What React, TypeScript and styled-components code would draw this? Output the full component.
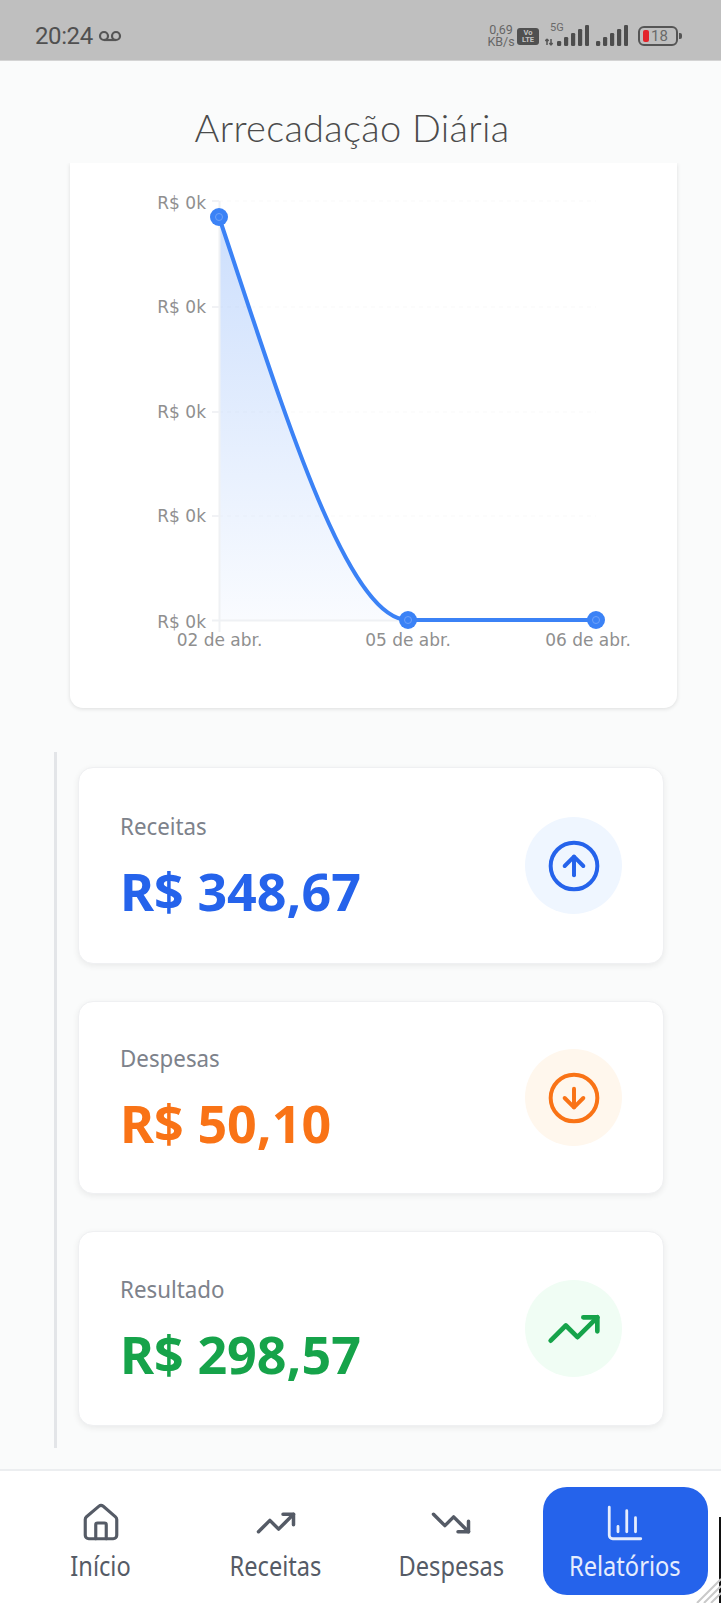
import React from 'react';
import styled, { createGlobalStyle } from 'styled-components';
import { CircleArrowUp, CircleArrowDown, TrendingUp, TrendingDown, House, ChartColumn } from 'lucide-react';

const Global = createGlobalStyle`
  html, body { margin: 0; padding: 0; background: #fafbfb; }
  * { box-sizing: border-box; }
`;

const Screen = styled.div`
  position: relative;
  width: 721px;
  height: 1603px;
  overflow: hidden;
  display: flex;
  flex-direction: column;
  background: #fafbfb;
  font-family: "Noto Sans", sans-serif;
`;

const StatusBar = styled.div`
  height: 61px;
  flex: none;
  background: #bfbfbf;
  border-bottom: 1px solid #d4d4d4;
  display: flex;
  align-items: center;
  justify-content: space-between;
  padding: 12px 38px 0 35px;
  color: #555;
  font-family: Roboto, sans-serif;
`;
const StatusLeft = styled.div`
  display: flex;
  align-items: center;
  gap: 5px;
`;
const Time = styled.span`
  font-size: 24px;
  letter-spacing: -0.4px;
  line-height: 1;
  color: #505050;
`;
const StatusRight = styled.div`
  display: flex;
  align-items: center;
`;
const Speed = styled.div`
  display: flex;
  flex-direction: column;
  align-items: center;
  font-size: 12.5px;
  line-height: 12.5px;
  color: #666;
  width: 28px;
  margin-right: 2px;
  white-space: nowrap;
`;
const Volte = styled.div`
  width: 22px;
  height: 17px;
  border-radius: 3px;
  background: #505050;
  color: #c4c4c4;
  font-size: 7.5px;
  font-weight: 700;
  line-height: 7.5px;
  display: flex;
  flex-direction: column;
  align-items: center;
  justify-content: center;
  margin-right: 6px;
`;
const SignalBox = styled.div`
  position: relative;
  width: 44px;
  height: 22px;
  margin-right: 7px;
`;
const FiveG = styled.span`
  position: absolute;
  left: 5px;
  top: -3px;
  font-size: 11px;
  line-height: 11px;
  color: #6a6a6a;
`;
const Battery = styled.div`
  position: relative;
  width: 40px;
  height: 20px;
  margin-left: 10px;
  margin-right: 5px;
  border: 2px solid #555;
  border-radius: 6px;
  display: flex;
  align-items: center;
  padding-left: 3px;
  &::after {
    content: '';
    position: absolute;
    right: -6px;
    top: 5px;
    width: 3px;
    height: 6px;
    border-radius: 0 2px 2px 0;
    background: #555;
  }
`;
const BatteryFill = styled.span`
  width: 6px;
  height: 12px;
  border-radius: 2px;
  background: #e3242b;
  margin-right: 2px;
`;
const BatteryText = styled.span`
  font-size: 15px;
  line-height: 1;
  color: #6a6a6a;
`;

const Header = styled.div`
  height: 102px;
  flex: none;
  display: flex;
  align-items: flex-start;
  justify-content: center;
  padding: 44px 17px 0 0;
`;
const Title = styled.h1`
  margin: 0;
  font-family: Lato, sans-serif;
  font-weight: 300;
  font-size: 38px;
  line-height: 44px;
  color: #4b4b4b;
  letter-spacing: 0.3px;
`;

const ChartCard = styled.section`
  flex: none;
  width: 607px;
  height: 545px;
  margin-left: 70px;
  background: #fff;
  border-radius: 0 0 13px 13px;
  box-shadow: 0 1px 4px rgba(0, 0, 0, 0.12);
  clip-path: inset(0 -8px -8px -8px);
`;
const ChartSvg = styled.svg`
  display: block;
  width: 607px;
  height: 545px;
`;
const AxisText = styled.text`
  font-family: "DejaVu Sans", sans-serif;
  font-size: 17px;
  fill: #8f8f8f;
`;

const SummaryColumn = styled.div`
  flex: none;
  width: 610px;
  height: 696px;
  margin: 44px 0 21px 54px;
  padding: 15px 0 0 21px;
  border-left: 3px solid #e3e5e8;
  display: flex;
  flex-direction: column;
  gap: 37px;
`;
const SummaryCard = styled.article<{ $h: number }>`
  height: ${p => p.$h}px;
  flex: none;
  background: #fff;
  border: 1px solid #eff0f2;
  border-radius: 15px;
  box-shadow: 0 2px 6px rgba(0, 0, 0, 0.07);
  display: flex;
  align-items: center;
  justify-content: space-between;
  padding: 0 41px 0 41px;
`;
const SummaryText = styled.div`
  display: flex;
  flex-direction: column;
  gap: 18px;
`;
const SummaryLabel = styled.span`
  font-size: 24px;
  line-height: 33px;
  color: #7d828b;
  transform: scaleX(0.93);
  transform-origin: left center;
`;
const SummaryValue = styled.span<{ $c: string }>`
  font-size: 52px;
  line-height: 62px;
  font-weight: 700;
  color: ${p => p.$c};
  white-space: nowrap;
`;
const IconCircle = styled.div<{ $bg: string; $c: string }>`
  width: 97px;
  height: 97px;
  border-radius: 50%;
  background: ${p => p.$bg};
  color: ${p => p.$c};
  display: flex;
  align-items: center;
  justify-content: center;
`;

const Nav = styled.nav`
  flex: none;
  height: 134px;
  background: #fff;
  border-top: 2px solid #eceef0;
  display: grid;
  grid-template-columns: 167px 167px 167px 165px;
  column-gap: 8px;
  padding: 16px 0 9px 17.5px;
`;
const NavItem = styled.div<{ $active?: boolean }>`
  border-radius: 24px;
  display: flex;
  flex-direction: column;
  align-items: center;
  height: 108px;
  background: ${p => (p.$active ? '#2563eb' : 'transparent')};
  color: ${p => (p.$active ? '#e6edfd' : '#555b66')};
`;
const NavIconSlot = styled.div`
  height: 58px;
  display: flex;
  align-items: flex-end;
  justify-content: center;
  padding-bottom: 1px;
`;
const NavLabel = styled.span`
  font-size: 27px;
  line-height: 36px;
  margin-top: 3px;
  white-space: nowrap;
  transform: scaleX(0.875);
`;

const EdgeLine = styled.div`
  position: absolute;
  right: 0;
  top: 1517px;
  bottom: 0;
  width: 2px;
  background: #111;
`;
const CornerHatch = styled.svg`
  position: absolute;
  right: 0;
  bottom: 0;
  width: 26px;
  height: 26px;
`;

function Signal({ arrows }: { arrows?: boolean }) {
  const bars = [
    [0, 16, 5],
    [7, 12, 9],
    [14, 8, 13],
    [21, 4, 17],
    [28, 0, 21],
  ];
  const dx = arrows ? 12 : 0;
  const w = arrows ? 44 : 32;
  return (
    <svg width={w} height="22" viewBox={`0 0 ${w} 22`} style={{ display: 'block' }}>
      {arrows && (
        <path d="M2 20v-6M2 14l-1.6 2M2 14l1.6 2M6 14v6M6 20l-1.6-2M6 20l1.6-2" stroke="#555" strokeWidth="1.5" fill="none" />
      )}
      {bars.map(([x, y, h], i) => (
        <rect key={i} x={x + dx} y={y} width="4.2" height={h} rx="1.3" fill="#4d4d4d" />
      ))}
    </svg>
  );
}

function Chart() {
  const gridYs = [201, 307, 412, 516];
  const labelYs = [208.5, 312.5, 417.5, 521.5, 627.5];
  const points = [[219, 217], [408, 620], [596, 620]];
  const xLabels: [number, string][] = [[219.5, '02 de abr.'], [408, '05 de abr.'], [588, '06 de abr.']];
  const curve = 'M219 217C281 402 346 620 408 620L596 620';
  return (
    <ChartSvg viewBox="70 163 607 545">
      <defs>
        <linearGradient id="area" x1="0" y1="0" x2="0" y2="1">
          <stop offset="0" stopColor="#3b82f6" stopOpacity="0.26" />
          <stop offset="1" stopColor="#3b82f6" stopOpacity="0.03" />
        </linearGradient>
      </defs>
      {gridYs.map(y => (
        <line key={y} x1="219" x2="596" y1={y} y2={y} stroke="#fbfbfc" strokeWidth="1.5" strokeDasharray="4 4" />
      ))}
      <path d="M219 217C281 402 346 620 408 620L219 620Z" fill="url(#area)" />
      <line x1="219.5" x2="219.5" y1="201" y2="632" stroke="#eff1f4" strokeWidth="2" />
      <line x1="212" x2="596" y1="620.5" y2="620.5" stroke="#eff1f4" strokeWidth="2" />
      {gridYs.map(y => (
        <line key={y} x1="212" x2="219" y1={y} y2={y} stroke="#f1f2f5" strokeWidth="2" />
      ))}
      <path d={curve} fill="none" stroke="#3b82f6" strokeWidth="4" />
      {points.map(([x, y]) => (
        <g key={x}>
          <circle cx={x} cy={y} r="9" fill="#3b82f6" />
          <circle cx={x} cy={y} r="3.5" fill="none" stroke="#6fa2f8" strokeWidth="1" />
        </g>
      ))}
      {labelYs.map((y, i) => (
        <AxisText key={i} x="206" y={y} textAnchor="end">R$ 0k</AxisText>
      ))}
      {xLabels.map(([x, t]) => (
        <AxisText key={t} x={x} y="646" textAnchor="middle">{t}</AxisText>
      ))}
    </ChartSvg>
  );
}

export default function App() {
  return (
    <Screen>
      <Global />
      <StatusBar>
        <StatusLeft>
          <Time>20:24</Time>
          <svg width="24" height="12" viewBox="0 0 24 12">
            <circle cx="6" cy="6" r="4" fill="none" stroke="#555" strokeWidth="2.2" />
            <circle cx="18" cy="6" r="4" fill="none" stroke="#555" strokeWidth="2.2" />
            <line x1="6" y1="10" x2="18" y2="10" stroke="#555" strokeWidth="2.2" />
          </svg>
        </StatusLeft>
        <StatusRight>
          <Speed><span>0,69</span><span>KB/s</span></Speed>
          <Volte><span>Vo</span><span>LTE</span></Volte>
          <SignalBox>
            <FiveG>5G</FiveG>
            <Signal arrows />
          </SignalBox>
          <Signal />
          <Battery>
            <BatteryFill />
            <BatteryText>18</BatteryText>
          </Battery>
        </StatusRight>
      </StatusBar>
      <Header>
        <Title>Arrecadação Diária</Title>
      </Header>
      <ChartCard>
        <Chart />
      </ChartCard>
      <SummaryColumn>
        <SummaryCard $h={197}>
          <SummaryText>
            <SummaryLabel>Receitas</SummaryLabel>
            <SummaryValue $c="#2563eb">R$ 348,67</SummaryValue>
          </SummaryText>
          <IconCircle $bg="#eff6ff" $c="#2563eb"><CircleArrowUp size={56} strokeWidth={1.7} /></IconCircle>
        </SummaryCard>
        <SummaryCard $h={193}>
          <SummaryText>
            <SummaryLabel>Despesas</SummaryLabel>
            <SummaryValue $c="#f97316">R$ 50,10</SummaryValue>
          </SummaryText>
          <IconCircle $bg="#fff7ed" $c="#f97316"><CircleArrowDown size={56} strokeWidth={1.7} /></IconCircle>
        </SummaryCard>
        <SummaryCard $h={195}>
          <SummaryText>
            <SummaryLabel>Resultado</SummaryLabel>
            <SummaryValue $c="#16a34a">R$ 298,57</SummaryValue>
          </SummaryText>
          <IconCircle $bg="#f0fdf4" $c="#16a34a"><TrendingUp size={56} strokeWidth={2} /></IconCircle>
        </SummaryCard>
      </SummaryColumn>
      <Nav>
        <NavItem><NavIconSlot><House size={42} strokeWidth={1.8} /></NavIconSlot><NavLabel>Início</NavLabel></NavItem>
        <NavItem><NavIconSlot><TrendingUp size={42} strokeWidth={2} /></NavIconSlot><NavLabel>Receitas</NavLabel></NavItem>
        <NavItem><NavIconSlot><TrendingDown size={42} strokeWidth={2} /></NavIconSlot><NavLabel>Despesas</NavLabel></NavItem>
        <NavItem $active><NavIconSlot><ChartColumn size={42} strokeWidth={1.6} /></NavIconSlot><NavLabel>Relatórios</NavLabel></NavItem>
      </Nav>
      <EdgeLine />
      <CornerHatch viewBox="0 0 26 26">
        <path d="M2 26L26 2M9 26L26 9M16 26L26 16" stroke="#c9c9c9" strokeWidth="2" />
      </CornerHatch>
    </Screen>
  );
}
